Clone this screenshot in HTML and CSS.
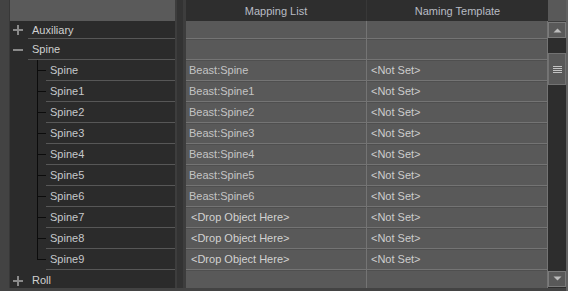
FILE: index.html
```html
<!DOCTYPE html>
<html lang="en">
<head>
  <meta charset="UTF-8">
  <title>Mapping List</title>
  <link rel="stylesheet" href="styles.css">
</head>
<body>
  <div class="frame">
    <!-- Tree of nodes -->
    <div class="tree">
      <div class="tree-head"></div>
      <div class="node first">
        <span class="toggle"><svg width="10" height="10"><path d="M0 5h10M5 0v10" stroke="#8a8a8a" stroke-width="2"/></svg></span>
        <span class="label">Auxiliary</span>
      </div>
      <div class="node">
        <span class="toggle"><svg width="10" height="10"><path d="M0 5h10" stroke="#8a8a8a" stroke-width="2"/></svg></span>
        <span class="label">Spine</span>
      </div>
      <div class="node child"><span class="indent"></span><span class="label">Spine</span></div>
      <div class="node child"><span class="indent"></span><span class="label">Spine1</span></div>
      <div class="node child"><span class="indent"></span><span class="label">Spine2</span></div>
      <div class="node child"><span class="indent"></span><span class="label">Spine3</span></div>
      <div class="node child"><span class="indent"></span><span class="label">Spine4</span></div>
      <div class="node child"><span class="indent"></span><span class="label">Spine5</span></div>
      <div class="node child"><span class="indent"></span><span class="label">Spine6</span></div>
      <div class="node child"><span class="indent"></span><span class="label">Spine7</span></div>
      <div class="node child"><span class="indent"></span><span class="label">Spine8</span></div>
      <div class="node child last"><span class="indent"></span><span class="label">Spine9</span></div>
      <div class="node">
        <span class="toggle"><svg width="10" height="10"><path d="M0 5h10M5 0v10" stroke="#8a8a8a" stroke-width="2"/></svg></span>
        <span class="label">Roll</span>
      </div>
    </div>

    <div class="splitter"></div>

    <!-- Mapping grid -->
    <div class="grid">
      <div class="grid-head">
        <div class="col">Mapping List</div>
        <div class="col">Naming Template</div>
      </div>
      <div class="grid-row first"><div class="cell"></div><div class="cell"></div></div>
      <div class="grid-row"><div class="cell"></div><div class="cell"></div></div>
      <div class="grid-row"><div class="cell">Beast:Spine</div><div class="cell">&lt;Not Set&gt;</div></div>
      <div class="grid-row"><div class="cell">Beast:Spine1</div><div class="cell">&lt;Not Set&gt;</div></div>
      <div class="grid-row"><div class="cell">Beast:Spine2</div><div class="cell">&lt;Not Set&gt;</div></div>
      <div class="grid-row"><div class="cell">Beast:Spine3</div><div class="cell">&lt;Not Set&gt;</div></div>
      <div class="grid-row"><div class="cell">Beast:Spine4</div><div class="cell">&lt;Not Set&gt;</div></div>
      <div class="grid-row"><div class="cell">Beast:Spine5</div><div class="cell">&lt;Not Set&gt;</div></div>
      <div class="grid-row"><div class="cell">Beast:Spine6</div><div class="cell">&lt;Not Set&gt;</div></div>
      <div class="grid-row"><div class="cell drop">&lt;Drop Object Here&gt;</div><div class="cell">&lt;Not Set&gt;</div></div>
      <div class="grid-row"><div class="cell drop">&lt;Drop Object Here&gt;</div><div class="cell">&lt;Not Set&gt;</div></div>
      <div class="grid-row"><div class="cell drop">&lt;Drop Object Here&gt;</div><div class="cell">&lt;Not Set&gt;</div></div>
      <div class="grid-row"><div class="cell"></div><div class="cell"></div></div>
    </div>

    <!-- Scrollbar -->
    <div class="scrollbar">
      <div class="sb-head"></div>
      <div class="sb-btn"><svg width="9" height="6"><path d="M0.5 5.5L4.5 1.5L8.5 5.5Z" fill="#bdbdbd"/></svg></div>
      <div class="sb-track">
        <div class="sb-thumb"><svg width="9" height="7"><path d="M0 0.5h9M0 2.5h9M0 4.5h9M0 6.5h9" stroke="#c4c4c4" stroke-width="1"/></svg></div>
      </div>
      <div class="sb-btn down"><svg width="9" height="6"><path d="M0.5 0.5L4.5 4.5L8.5 0.5Z" fill="#bdbdbd"/></svg></div>
    </div>
  </div>
</body>
</html>
```

FILE: styles.css
```css
body {
  margin: 0;
  background: #444;
  font-family: "Liberation Sans", Arial, sans-serif;
  font-size: 11px;
}
.frame {
  display: flex;
  width: 568px;
  height: 291px;
  box-sizing: border-box;
  padding: 0 0 3px 9px;
  background: #434343;
  border-right: 2px solid #626262;
  overflow: hidden;
}

/* tree */
.tree {
  width: 166px;
  flex: none;
  background: #2b2b2b;
  border-left: 1px solid #383838;
  box-sizing: border-box;
  overflow: hidden;
}
.tree-head {
  height: 21px;
  background: #5a5a5a;
}
.node {
  display: flex;
  height: 21px;
  color: #d0d0d0;
}
.node.first {
  height: 18px;
}
.toggle {
  width: 18px;
  flex: none;
  display: flex;
  align-items: center;
  padding-left: 3px;
  box-sizing: border-box;
}
.label {
  flex: 1;
  display: flex;
  align-items: center;
  padding-left: 4px;
  border-bottom: 1px solid #575757;
}
.child {
  color: #c6c8cc;
}
.indent {
  width: 36px;
  flex: none;
  background:
    linear-gradient(#0c0c0c, #0c0c0c) 27px 0 / 1px 100% no-repeat,
    linear-gradient(#0c0c0c, #0c0c0c) 27px 10px / 9px 1px no-repeat;
}
.child.last .indent {
  background:
    linear-gradient(#0c0c0c, #0c0c0c) 27px 0 / 1px 11px no-repeat,
    linear-gradient(#0c0c0c, #0c0c0c) 27px 10px / 9px 1px no-repeat;
}

.splitter {
  width: 11px;
  flex: none;
  background: #333;
  border-left: 2px solid #3d3d3d;
  border-right: 3px solid #3d3d3d;
  box-sizing: border-box;
}

/* grid */
.grid {
  width: 362px;
  flex: none;
  overflow: hidden;
  background: #3a3a3a;
}
.grid-head {
  display: flex;
  height: 21px;
  background: #2e2e2e;
  color: #b9bcc4;
}
.grid-head .col {
  display: flex;
  align-items: center;
  justify-content: center;
  width: 181px;
  box-sizing: border-box;
}
.grid-head .col:first-child {
  border-right: 1px solid #383838;
}
.grid-row {
  display: flex;
  height: 21px;
}
.grid-row.first {
  height: 18px;
}
.cell {
  width: 181px;
  display: flex;
  align-items: center;
  padding-left: 4px;
  box-sizing: border-box;
  background: #595959;
  color: #cdcdcd;
  border-right: 1px solid #747474;
  border-bottom: 1px solid #747474;
  box-shadow: inset 0 1px #4f4f4f;
}
.cell:first-child {
  padding-left: 3px;
  color: #c4c4c4;
}
.cell.drop {
  padding-left: 5px;
  color: #d2d2d2;
}
.grid-row.first .cell {
  box-shadow: none;
}

/* scrollbar */
.scrollbar {
  width: 18px;
  flex: none;
  display: flex;
  flex-direction: column;
  background: #2d2d2d;
}
.sb-head {
  height: 21px;
  background: #595959;
  border-bottom: 1px solid #3c3c3c;
}
.sb-btn {
  height: 16px;
  display: flex;
  align-items: center;
  justify-content: center;
  background: #595959;
  border: 1px solid #7a7a7a;
  box-sizing: border-box;
}
.sb-btn.down {
  margin-bottom: 1px;
}
.sb-track {
  flex: 1;
  padding-top: 15px;
}
.sb-thumb {
  height: 32px;
  display: flex;
  align-items: center;
  justify-content: center;
  background: #595959;
  border: 1px solid #727272;
  box-sizing: border-box;
}
```
